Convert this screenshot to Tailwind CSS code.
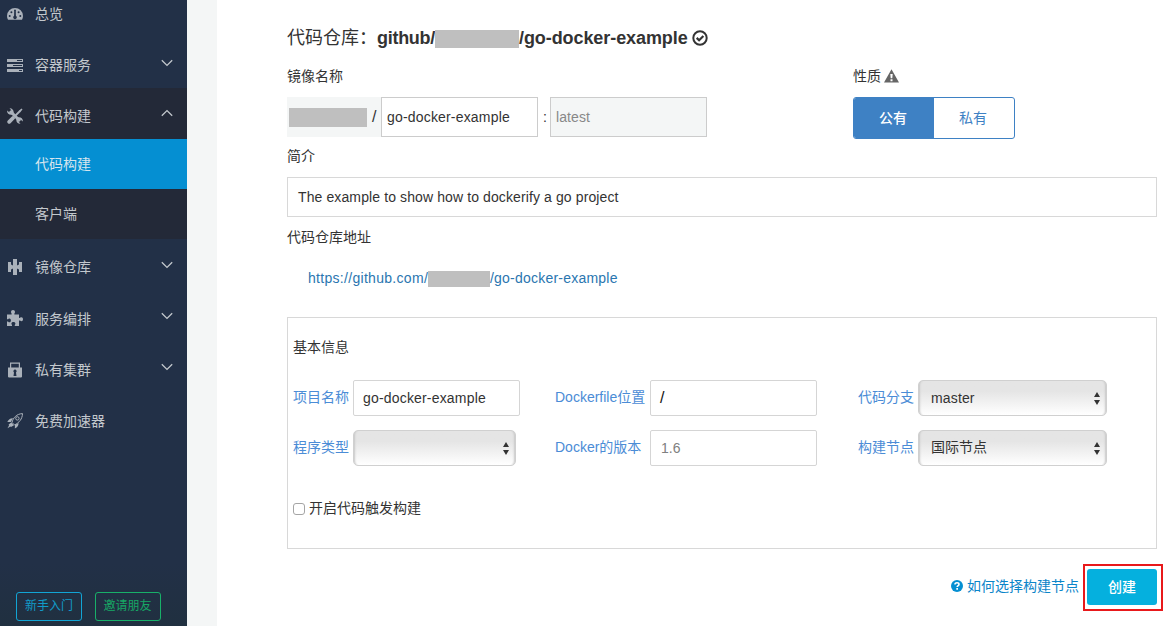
<!DOCTYPE html>
<html lang="zh-CN">
<head>
<meta charset="utf-8">
<title>代码构建</title>
<script src="https://cdn.jsdelivr.net/npm/@tailwindcss/browser@4"></script>
</head>
<body class="flex h-[626px] w-[1170px] overflow-hidden bg-white font-['Liberation_Sans','Noto_Sans_CJK_SC',sans-serif] text-sm leading-5 text-[#333]">
<svg class="hidden">
  <symbol id="chev" viewBox="0 0 12 8"><path d="M.8 1.2 6 6.4l5.2-5.2" fill="none" stroke="currentColor" stroke-width="1.3"/></symbol>
  <symbol id="updown" viewBox="0 0 6 13"><path d="M3 0 6 5H0zM0 8h6L3 13z" fill="#333"/></symbol>
</svg>

<aside class="flex w-[187px] shrink-0 flex-col bg-linear-to-b from-[#223047] from-90% to-[#203040] text-[#c3c8cd]">
  <nav class="-mt-[14px] flex grow flex-col">
    <a class="flex h-[51px] shrink-0 items-center pt-[5px] pl-[7px]">
      <svg class="mr-3 size-4 text-[#aab1ba]" viewBox="0 0 16 16"><path fill="currentColor" fill-rule="evenodd" d="M8 2a8 8 0 0 0-8 8c0 1.500.4 2.800 1 3.800h14c.6-1 1-2.300 1-3.800a8 8 0 0 0-8-8zM2.700 9a1 1 0 1 1 0 2 1 1 0 0 1 0-2zM4.400 5.200a1 1 0 1 1 0 2 1 1 0 0 1 0-2zM8 3.400a1 1 0 0 1 .8 1.500l.1 4.800a1.800 1.800 0 1 1-1.800 0l.1-4.800A1 1 0 0 1 8 3.400zM11.600 5.200a1 1 0 1 1 0 2 1 1 0 0 1 0-2zM13.300 9a1 1 0 1 1 0 2 1 1 0 0 1 0-2z"/></svg>总览
    </a>
    <a class="flex h-[51px] shrink-0 items-center pt-[5px] pl-[7px]">
      <svg class="mr-3 size-4 text-[#aab1ba]" viewBox="0 0 16 16"><path fill="currentColor" fill-rule="evenodd" d="M0 2h16v3H0zM0 7h16v3H0zM0 12h16v3H0zM10 3v1h5V3zM6 8v1h9V8zM12 13v1h3v-1z"/></svg><span class="grow">容器服务</span><svg class="mr-3.5 mb-[5px] h-2 w-3"><use href="#chev"/></svg>
    </a>
    <a class="flex h-[51px] shrink-0 items-center bg-[#232938] pt-[5px] pl-[7px]">
      <svg class="mr-3 size-4 text-[#aab1ba]" viewBox="0 0 16 16"><path fill="none" stroke="currentColor" stroke-width="3" d="m3 3 10 10"/><path fill="none" stroke="currentColor" stroke-width="1.800" d="m8 8 5-5"/><path fill="none" stroke="currentColor" stroke-width="3.800" stroke-linecap="round" d="m2.200 13.800 3.800-3.800"/><path fill="currentColor" d="M.2 2.500 2.200 4.300l1.700-.4.400-1.700L2.500.2C5 0 6.900 2 6.700 4.700l-2 2C1.700 7-.2 5 .2 2.500zM15.800 13.500l-2-1.800-1.700.4-.4 1.700 1.800 2c-2.500.2-4.400-1.800-4.200-4.500l2-2c3-.3 4.900 1.700 4.500 4.200zM11.800 2.800 14.500.6l1 1-2.300 2.600z"/></svg><span class="grow">代码构建</span><svg class="mr-3.5 mb-[6px] h-2 w-3 rotate-180"><use href="#chev"/></svg>
    </a>
    <a class="flex h-[50px] shrink-0 items-center bg-[#058fd2] pl-[35px] text-[#d5e5ee]">代码构建</a>
    <a class="flex h-[50px] shrink-0 items-center bg-[#232938] pl-[35px]">客户端</a>
    <a class="flex h-[51px] shrink-0 items-center pt-[5px] pl-[7px]">
      <svg class="mr-3 size-4 text-[#aab1ba]" viewBox="0 0 16 16"><path fill="currentColor" d="M1 3h3v2.500l2 1V0h4v6.500l2-1V3h3v10h-3v-2.500l-2-1V16H6V9.500l-2 1V13H1z"/></svg><span class="grow">镜像仓库</span><svg class="mr-3.5 mb-[5px] h-2 w-3"><use href="#chev"/></svg>
    </a>
    <a class="flex h-[51px] shrink-0 items-center pt-[6px] pl-[7px]">
      <svg class="mr-3 mb-0.5 size-4 text-[#aab1ba]" viewBox="0 0 16 16"><path fill="currentColor" d="M0 4.500h4.600C5 3.400 4 3 4 1.900 4 .8 4.800 0 6 0s2 .8 2 1.900c0 1.100-1 1.500-.6 2.600H12v3.400c1.200.4 1.300-.6 2.400-.6 1 0 1.600.9 1.600 2s-.6 2-1.600 2c-1.100 0-1.200-1-2.400-.6V16H7.800c-.4-1.400.6-1.500.6-2.600 0-.9-.8-1.500-2-1.500s-2 .6-2 1.500c0 1.100 1 1.200.6 2.600H0v-4.400c1.300-.4 1.400.7 2.400.7.900 0 1.500-.8 1.500-1.900s-.6-1.900-1.500-1.900c-1 0-1.100 1.100-2.400.7z"/></svg><span class="grow">服务编排</span><svg class="mr-3.5 mb-[6px] h-2 w-3"><use href="#chev"/></svg>
    </a>
    <a class="flex h-[51px] shrink-0 items-center pt-[6px] pl-[7px]">
      <svg class="mr-3 size-4 text-[#aab1ba]" viewBox="0 0 16 16"><path fill="none" stroke="currentColor" stroke-width="1.200" d="M3.600 6V1.100h8.800V6"/><path fill="currentColor" fill-rule="evenodd" d="M1 5.500h14v9.300l-.7.700H1.700l-.7-.7zM8 7.500a1.700 1.700 0 0 0-1 3L6.500 14h3L9 10.500a1.700 1.700 0 0 0-1-3z"/></svg><span class="grow">私有集群</span><svg class="mr-3.5 mb-[6px] h-2 w-3"><use href="#chev"/></svg>
    </a>
    <a class="flex h-[51px] shrink-0 items-center pt-[6px] pl-[7px]">
      <svg class="mr-3 size-4 text-[#aab1ba]" viewBox="0 0 16 16"><path fill="none" stroke="currentColor" d="M5 9.500C6 5 9.500.8 15.500.6 15.400 6 12 9.800 7.500 12z"/><circle cx="10.400" cy="5.400" r="1.700" fill="none" stroke="currentColor"/><path fill="currentColor" d="M.3 9C1.500 6.200 3.500 5 6 5.200L3.800 9zM8 12l3.500-2c.2 2.500-1 4.400-3.700 5.600zM4.200 9.500 7 12.200 4 14l-.6-.6L.5 15.300l1.600-3-.5-.8z"/></svg>免费加速器
    </a>
  </nav>
  <div class="mb-[5px] flex gap-[13px] pl-4 text-xs">
    <a class="flex h-[29px] w-[66px] items-center justify-center rounded-[3px] border border-[#12a5d5] pb-0.5 text-[#119bc9]">新手入门</a>
    <a class="flex h-[29px] w-[66px] items-center justify-center rounded-[3px] border border-[#18b069] pr-px pb-0.5 text-[#17a765]">邀请朋友</a>
  </div>
</aside>
<div class="w-[30px] shrink-0 bg-[#f4f6f6]"></div>

<main class="flex w-[940px] shrink-0 flex-col pt-[26px] pl-[70px]">
  <h1 class="flex h-6 items-center text-lg whitespace-nowrap"><span>代码仓库：</span><b class="w-[58px] tracking-[-0.28px]">github/</b><span class="mt-0.5 h-[18px] w-[84px] bg-[#bfbfbf]"></span><b class="w-[169px] tracking-[-0.08px]">/go-docker-example</b>
    <svg class="ml-1 size-4" viewBox="0 0 16 16" fill="none" stroke="#333"><circle cx="8" cy="8" r="6.700" stroke-width="2"/><path d="m4.700 7.900 2.400 2.400 4.300-4.300" stroke-width="2.200"/></svg>
  </h1>
  <div class="mt-4 flex">
    <section class="w-[566px]">
      <h2 class="h-5">镜像名称</h2>
      <div class="mt-[11px] flex h-10 items-center">
        <div class="flex h-10 w-[94px] items-center bg-[#f4f6f6] pl-0.5"><span class="h-[19px] w-[78px] bg-[#bfbfbf]"></span><span class="ml-[5px] text-base">/</span></div>
        <div class="flex h-10 w-[157px] items-center border border-[#ccc] bg-white pl-[5px] tracking-[0.18px]">go-docker-example</div>
        <span class="w-3 pl-[5px]">:</span>
        <div class="flex h-10 w-[157px] items-center border border-[#ccc] bg-[#f4f6f6] pl-[5px] tracking-[0.1px] text-[#888]">latest</div>
      </div>
    </section>
    <section>
      <h2 class="flex h-5 items-center">性质<svg class="ml-[3px] h-[14px] w-[15px]" viewBox="0 0 15 14"><path fill="#666" fill-rule="evenodd" d="M7.500.3 15 13.500H0zM6.300 5l.4 4.200h1.600L8.700 5zM6.500 10.300v1.900h2v-1.900z"/></svg></h2>
      <div class="mt-[11px] flex h-[42px] w-[162px] overflow-hidden rounded-[3px] border border-[#3e81c4] text-[#3e81c4]">
        <button class="w-20 bg-[#3e81c4] pr-0.5 font-medium text-white">公有</button><button class="w-20 pr-0.5">私有</button>
      </div>
    </section>
  </div>
  <h2 class="mt-[7px] h-5">简介</h2>
  <div class="mt-[11px] flex h-10 w-[870px] items-center border border-[#d8d8d8] pl-[10px] tracking-[0.11px]">The example to show how to dockerify a go project</div>
  <h2 class="mt-[10px] h-5">代码仓库地址</h2>
  <a class="mt-[21px] flex h-5 items-center pl-[21px] whitespace-nowrap text-[#2a76b0]"><span class="w-[120px] tracking-[0.3px]">https://github.com/</span><span class="mt-0.5 h-4 w-[62px] bg-[#bfbfbf]"></span><span class="tracking-[0.22px]">/go-docker-example</span></a>

  <section class="mt-[29px] h-[232px] w-[870px] border border-[#d8d8d8] pt-[19px] pl-[5px]">
    <h2 class="h-5">基本信息</h2>
    <div class="mt-[23px] grid grid-cols-[262px_303px_250px] gap-y-[14px] text-[#333]">
      <label class="flex h-9 items-center"><span class="mb-0.5 w-[60px] text-[#4b8cd6]">项目名称</span><span class="flex h-9 w-[167px] items-center rounded-[2px] border border-[#d5d5d5] pb-px pl-[9px] tracking-[0.18px]">go-docker-example</span></label>
      <label class="flex h-9 items-center"><span class="mb-0.5 w-[95px] text-[#4b8cd6]">Dockerfile位置</span><span class="flex h-9 w-[167px] items-center rounded-[2px] border border-[#d5d5d5] pb-px pl-[9px] text-base text-[#111]">/</span></label>
      <label class="flex h-9 items-center"><span class="mb-0.5 w-[60px] text-[#4b8cd6]">代码分支</span><span class="flex h-9 w-[189px] items-center justify-between rounded-[5px] border border-[#d0d0d0] bg-linear-to-b from-[#e5e5e5] from-30% to-white pr-[6px] pl-3 tracking-[0.15px] shadow-[inset_3px_0_2px_-2px_#c8c8c8,inset_-3px_0_2px_-2px_#c8c8c8]">master<svg class="h-[13px] w-1.5"><use href="#updown"/></svg></span></label>
      <label class="flex h-9 items-center"><span class="mb-0.5 w-[60px] text-[#4b8cd6]">程序类型</span><span class="flex h-9 w-[163px] items-center justify-end rounded-[5px] border border-[#d0d0d0] bg-linear-to-b from-[#e5e5e5] from-30% to-white pr-[6px] shadow-[inset_3px_0_2px_-2px_#c8c8c8,inset_-3px_0_2px_-2px_#c8c8c8]"><svg class="h-[13px] w-1.5"><use href="#updown"/></svg></span></label>
      <label class="flex h-9 items-center"><span class="mb-0.5 w-[95px] text-[#4b8cd6]">Docker的版本</span><span class="flex h-9 w-[167px] items-center rounded-[2px] border border-[#d5d5d5] pb-px pl-[10px] text-[#808080]">1.6</span></label>
      <label class="flex h-9 items-center"><span class="mb-0.5 w-[60px] text-[#4b8cd6]">构建节点</span><span class="flex h-9 w-[189px] items-center justify-between rounded-[5px] border border-[#d0d0d0] bg-linear-to-b from-[#e5e5e5] from-30% to-white pr-[6px] pl-3 shadow-[inset_3px_0_2px_-2px_#c8c8c8,inset_-3px_0_2px_-2px_#c8c8c8]"><span class="mb-0.5">国际节点</span><svg class="h-[13px] w-1.5"><use href="#updown"/></svg></span></label>
    </div>
    <label class="mt-8 flex h-5 items-center"><span class="mt-0.5 mr-[4px] size-3 rounded-[3px] border border-[#a5a5a5] bg-white"></span><span class="mb-px">开启代码触发构建</span></label>
  </section>

  <footer class="mt-[15px] flex h-[47px] w-[876px] items-center justify-end text-[#0b85c9]">
    <svg class="mr-1 mb-1 size-3" viewBox="0 0 12 12"><circle cx="6" cy="6" r="6" fill="#058fd2"/><path d="M4 4.500C4 3.300 4.900 2.800 6 2.800s2 .6 2 1.600c0 1.300-1.800 1.200-1.800 2.700" fill="none" stroke="#fff" stroke-width="1.600"/><path d="M5.300 8.100h1.700v1.600H5.300z" fill="#fff"/></svg><span class="mb-1">如何选择构建节点</span>
    <div class="ml-1 h-[47px] w-20 border-2 border-[#e8191b] pt-[3px] pr-1 pb-1 pl-0.5"><button class="h-full w-full rounded-[3px] bg-[#05b0de] font-medium text-white">创建</button></div>
  </footer>
</main>
</body>
</html>
